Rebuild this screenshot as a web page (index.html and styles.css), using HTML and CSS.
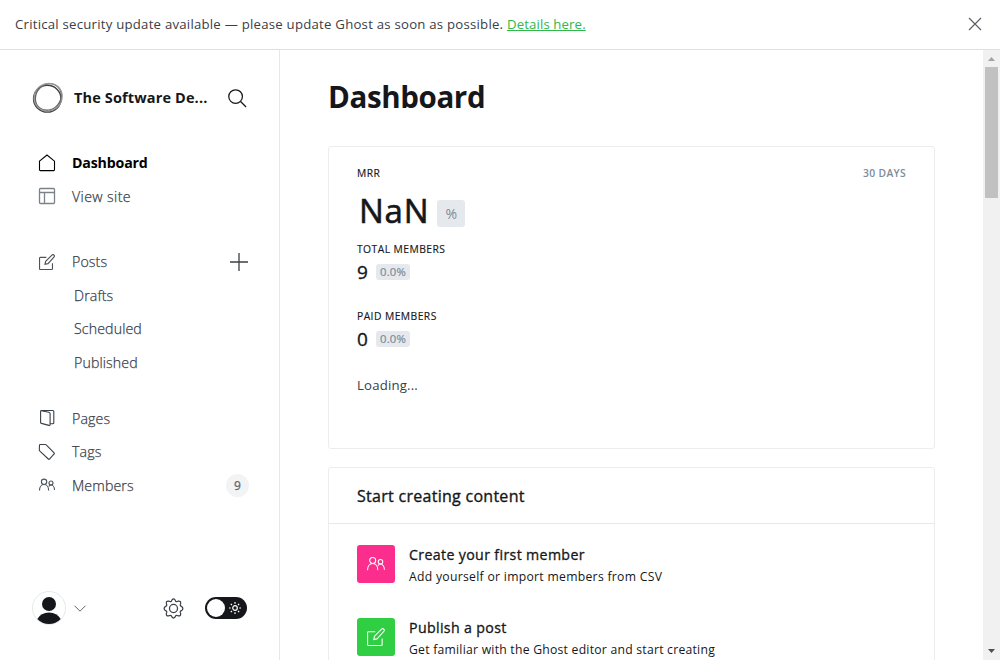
FILE: index.html
```html
<!DOCTYPE html>
<html lang="en">
<head>
<meta charset="utf-8">
<title>Dashboard</title>
<link rel="stylesheet" href="styles.css">
</head>
<body>
<svg class="defs" width="0" height="0">
  <symbol id="members" viewBox="0 0 24 24"><circle cx="7.6" cy="7.2" r="4"/><circle cx="18" cy="9" r="3"/><path d="M.75 20.200c0-5 2.700-9 6.850-9s6.850 4 6.850 9M14.600 14.300c.8-1.400 2-2.300 3.400-2.300 3 0 5.250 3.500 5.250 7.500"/></symbol>
  <symbol id="edit" viewBox="0 0 24 24"><path d="M20.200 14v8.200a1 1 0 0 1-1 1H1.800a1 1 0 0 1-1-1V6a1 1 0 0 1 1-1H11M13.500 14.500l-4.500 1 1-4.500 9.400-9.400a2.100 2.100 0 0 1 3 3z"/></symbol>
</svg>
<header class="banner">
  <p class="banner-text">Critical security update available — please update Ghost as soon as possible. <a href="#">Details here.</a></p>
  <svg class="close" viewBox="0 0 14 14"><path d="M1 1l12 12M13 1L1 13"/></svg>
</header>
<div class="app">
  <nav class="sidebar">
    <div class="brand">
      <svg class="logo" viewBox="0 0 32 32"><ellipse class="ring-a" cx="15.300" cy="16.700" rx="13.700" ry="13.400"/><ellipse class="ring-b" cx="17" cy="15.600" rx="14" ry="12.300" transform="rotate(-50 16 16)"/><ellipse class="ring-c" cx="16.600" cy="15.400" rx="14.300" ry="13.600" transform="rotate(-35 16 16)"/></svg>
      <span class="brand-name">The Software De...</span>
      <svg class="search" viewBox="0 0 20 20"><circle cx="8" cy="8" r="7.200"/><path d="M13.200 13.200L19 19"/></svg>
    </div>
    <ul class="menu menu-top">
      <li class="item active"><svg class="icon" viewBox="0 0 18 18"><path d="M1.500 7.200L9 1l7.500 6.200v8.600a.8.8 0 0 1-.8.800H2.300a.8.8 0 0 1-.8-.8z"/></svg><span class="name">Dashboard</span></li>
      <li class="item muted"><svg class="icon" viewBox="0 0 18 18"><rect x="1.500" y="1.500" width="15" height="15" rx="1"/><path d="M1.500 5.500h15M6.500 5.500v11"/></svg><span class="name">View site</span></li>
    </ul>
    <ul class="menu menu-posts">
      <li class="item"><svg class="icon edit-icon"><use href="#edit"/></svg><span class="name">Posts</span><svg class="plus" viewBox="0 0 18 18"><path d="M9 0v18M0 9h18"/></svg></li>
      <li class="sub">Drafts</li>
      <li class="sub">Scheduled</li>
      <li class="sub">Published</li>
    </ul>
    <ul class="menu menu-content">
      <li class="item"><svg class="icon" viewBox="0 0 18 18"><path d="M3.200 1.500h11.600a1 1 0 0 1 1 1v11.300a1 1 0 0 1-1 1H12.500M3.200 1.700l7.700 1.600q1.200.3 1.200 1.300v10.900q0 1.200-1.200.9l-7.500-2a1 1 0 0 1-.8-1V2.500q0-1 .6-.8z"/></svg><span class="name">Pages</span></li>
      <li class="item"><svg class="icon" viewBox="0 0 18 18"><path d="M2.200 1.500h5q.6 0 1 .4l7.900 7.900q.6.600 0 1.200l-4.600 5q-.6.600-1.200 0L1.900 8.100q-.6-.5-.6-1.100l.2-4.700q0-.8.700-.8z"/></svg><span class="name">Tags</span></li>
      <li class="item"><svg class="icon members-icon"><use href="#members"/></svg><span class="name">Members</span><span class="count">9</span></li>
    </ul>
    <footer class="user">
      <svg class="avatar" viewBox="0 0 34 34"><circle class="avatar-edge" cx="17" cy="17" r="16.500"/><circle cx="17" cy="13" r="7"/><path d="M5.300 28Q9 21.500 17 21.500T28.700 28Q24 33 17 33T5.300 28z"/></svg>
      <svg class="chevron" viewBox="0 0 12 7"><path d="M.5.700L6 6.200 11.500.700"/></svg>
      <svg class="gear" viewBox="0 0 22 22"><circle cx="11" cy="11" r="4.200"/><path d="M9.300 2.100q1.700-2.200 3.400 0l.5 1.100q.6.900 1.700.5l1.100-.4q2.800-.4 2.500 2.400l-.4 1.200q-.3 1 .7 1.600l1 .6q2 1.900 0 3.800l-1 .6q-1 .6-.7 1.600l.4 1.200q.3 2.800-2.500 2.400l-1.100-.4q-1.100-.4-1.700.5l-.5 1.100q-1.700 2.200-3.400 0l-.5-1.100q-.6-.9-1.700-.5l-1.100.4q-2.800.4-2.500-2.400l.4-1.200q.3-1-.7-1.600l-1-.6q-2-1.900 0-3.800l1-.6q1-.6.700-1.600l-.4-1.200q-.3-2.800 2.500-2.400l1.100.4q1.100.4 1.700-.5z"/></svg>
      <span class="toggle"><span class="knob"></span><svg class="sun" viewBox="0 0 12 12"><circle cx="6" cy="6" r="2.300"/><path d="M6 0v1.700M6 10.300V12M0 6h1.700M10.300 6H12M1.800 1.800L3 3M9 9l1.200 1.200M1.800 10.200L3 9M9 3l1.200-1.200"/></svg></span>
    </footer>
  </nav>
  <main class="main">
    <h1 class="title">Dashboard</h1>
    <section class="card stats">
      <div class="stats-head"><span class="label">MRR</span><span class="period">30 DAYS</span></div>
      <div class="mrr"><span class="mrr-value">NaN</span><span class="badge badge-large">%</span></div>
      <div class="label">TOTAL MEMBERS</div>
      <div class="stat"><span class="stat-value">9</span><span class="badge">0.0%</span></div>
      <div class="label label-paid">PAID MEMBERS</div>
      <div class="stat"><span class="stat-value">0</span><span class="badge">0.0%</span></div>
      <p class="loading">Loading...</p>
    </section>
    <section class="card start">
      <h2 class="start-title">Start creating content</h2>
      <div class="task"><span class="tile pink"><svg class="tile-icon"><use href="#members"/></svg></span>
        <div><h3 class="task-title">Create your first member</h3><p class="task-text">Add yourself or import members from CSV</p></div></div>
      <div class="task"><span class="tile green"><svg class="tile-icon"><use href="#edit"/></svg></span>
        <div><h3 class="task-title">Publish a post</h3><p class="task-text task-text-long">Get familiar with the Ghost editor and start creating</p></div></div>
    </section>
  </main>
  <aside class="scrollbar"><svg class="arrow up" viewBox="0 0 7 4"><path d="M0 4L3.500 0 7 4z"/></svg><span class="thumb"></span><svg class="arrow down" viewBox="0 0 7 4"><path d="M0 0h7L3.500 4z"/></svg></aside>
</div>
</body>
</html>
```
FILE: styles.css
```css
* { box-sizing: border-box; }
body { margin: 0; width: 1000px; height: 660px; overflow: hidden; display: flex; flex-direction: column; background: #fff; color: #15171a; font-family: "Open Sans", "Noto Sans", sans-serif; font-size: 14px; }
h1, h2, h3, p, ul { margin: 0; padding: 0; }
svg { display: block; flex: none; fill: none; stroke: currentColor; overflow: visible; }
.defs { position: absolute; }
.banner { height: 50px; flex: none; display: flex; align-items: center; justify-content: space-between; padding: 0 18px 2px 15px; border-bottom: 1px solid #dddfe1; color: #394047; }
.banner-text { font-size: 13.2px; line-height: 20px; white-space: nowrap; letter-spacing: .232px; }
.banner-text a { color: #30b84a; text-decoration: underline; letter-spacing: .13px; }
.close { width: 14px; height: 14px; color: #5b6066; stroke-width: 1.200; }
.app { display: flex; flex: 1; min-height: 0; }
.sidebar { width: 280px; flex: none; border-right: 1px solid #e5e7e9; padding: 32px 30px 0 32px; display: flex; flex-direction: column; }
.brand { height: 32px; display: flex; align-items: center; }
.logo { width: 32px; height: 32px; }
.ring-a { stroke: #444; stroke-width: 1.500; }
.ring-b { stroke: #666; stroke-width: 1.400; }
.ring-c { stroke: #999; stroke-width: 1.200; }
.brand-name { margin-left: 10px; margin-bottom: 2px; font-size: 14.500px; font-weight: 700; letter-spacing: .14px; }
.search { width: 19px; height: 19px; margin-left: auto; margin-right: 2px; stroke-width: 1.300; }
.menu { list-style: none; font-size: 14.200px; font-weight: 300; color: #394047; letter-spacing: .11px; -webkit-text-stroke: .25px currentColor; }
.menu-top { margin-top: 32px; }
.menu-posts { margin-top: 32px; }
.menu-content { margin-top: 22.500px; }
.item { height: 33.600px; display: flex; align-items: center; padding-left: 6px; }
.name { margin-left: 16px; }
.icon { width: 18px; height: 18px; stroke-width: 1.100; }
.active { color: #000; font-weight: 700; letter-spacing: -.17px; -webkit-text-stroke: 0; }
.muted { letter-spacing: .39px; }
.muted .icon { color: #7c8289; stroke-width: 1.300; }
.edit-icon, .members-icon { width: 16px; height: 16px; margin: 0 1px; stroke-width: 1.700; color: #4c535a; }
.sub { height: 33.400px; padding-left: 42px; display: flex; align-items: center; }
.plus { width: 18px; height: 18px; margin-left: auto; margin-right: 1px; stroke-width: 1.300; }
.count { width: 23px; height: 23px; margin-left: auto; border-radius: 50%; background: #f1f3f4; text-align: center; line-height: 23px; font-size: 12px; font-weight: 400; color: #5d666f; }
.user { margin-top: auto; margin-bottom: 35px; height: 34px; display: flex; align-items: center; }
.avatar { width: 34px; height: 34px; fill: #15171a; stroke: none; }
.avatar-edge { fill: #fff; stroke: #e5e9ed; }
.chevron { width: 12px; height: 7px; margin-left: 8px; color: #5d666f; }
.gear { width: 21px; height: 21px; margin-left: auto; color: #394047; stroke-width: 1.300; }
.toggle { width: 42px; height: 22px; margin-left: 21px; margin-right: 2px; padding: 2px 6px 2px 2px; border-radius: 11px; background: #15171a; color: #fff; display: flex; align-items: center; justify-content: space-between; }
.knob { width: 18px; height: 18px; border-radius: 50%; background: #fff; }
.sun { width: 12px; height: 12px; stroke-width: 1.200; }
.main { flex: 1; padding: 24px 48px 0 48px; overflow: hidden; }
.title { height: 46px; line-height: 46px; font-size: 29.500px; font-weight: 700; letter-spacing: -.37px; }
.card { border: 1px solid #ebedef; border-radius: 3px; padding: 0 28px; }
.stats { margin-top: 26px; height: 303px; padding-top: 18px; }
.stats-head { display: flex; justify-content: space-between; }
.label, .period { font-size: 10.300px; line-height: 16px; height: 16px; letter-spacing: .45px; -webkit-text-stroke: .15px currentColor; }
.period { color: #7c8b9a; font-weight: 600; letter-spacing: .35px; -webkit-text-stroke: 0; }
.mrr { height: 60px; display: flex; align-items: center; padding-left: 2px; }
.mrr-value { font-size: 33px; line-height: 44px; letter-spacing: .75px; -webkit-text-stroke: .6px currentColor; }
.badge { margin-left: 8px; margin-bottom: 1px; height: 16px; width: 34px; line-height: 16px; text-align: center; border-radius: 3px; background: #e5e9ed; color: #7c8b9a; font-size: 11.300px; letter-spacing: .19px; -webkit-text-stroke: .2px currentColor; }
.badge-large { width: 28px; height: 27px; line-height: 27px; font-size: 14px; margin: 4px 0 0 8px; -webkit-text-stroke: 0; }
.stat { height: 31px; display: flex; align-items: center; }
.stat-value { font-size: 19px; line-height: 26px; margin-bottom: 2px; width: 11px; -webkit-text-stroke: .35px currentColor; }
.label-paid { margin-top: 20px; }
.loading { margin-top: 20px; line-height: 20px; font-size: 13.200px; color: #394047; letter-spacing: .18px; }
.start { margin-top: 18px; height: 400px; padding: 0; }
.start-title { height: 56px; line-height: 56px; padding: 0 28px; border-bottom: 1px solid #e5e9ed; font-size: 16px; font-weight: 400; letter-spacing: .28px; -webkit-text-stroke: .35px currentColor; }
.task { display: flex; height: 73px; padding: 21px 28px 0; }
.tile { width: 38px; height: 38px; margin-right: 14px; border-radius: 3px; display: grid; place-items: center; color: #fff; }
.pink { background: #fb2d8d; }
.green { background: #30cf43; }
.tile-icon { width: 18px; height: 18px; stroke-width: 1.400; }
.task-title { font-size: 14.200px; font-weight: 400; line-height: 20px; letter-spacing: .35px; -webkit-text-stroke: .3px currentColor; }
.task-text { font-size: 12.200px; line-height: 20px; margin-top: 2px; letter-spacing: .29px; }
.task-text-long { letter-spacing: .24px; }
.scrollbar { width: 17px; flex: none; background: #f1f1f1; display: flex; flex-direction: column; align-items: center; padding: 7px 0; }
.arrow { width: 7px; height: 4px; stroke: none; }
.up { fill: #a3a3a3; }
.down { fill: #505050; margin-top: auto; }
.thumb { width: 13px; height: 131px; margin-top: 6px; background: #c1c1c1; }
```
